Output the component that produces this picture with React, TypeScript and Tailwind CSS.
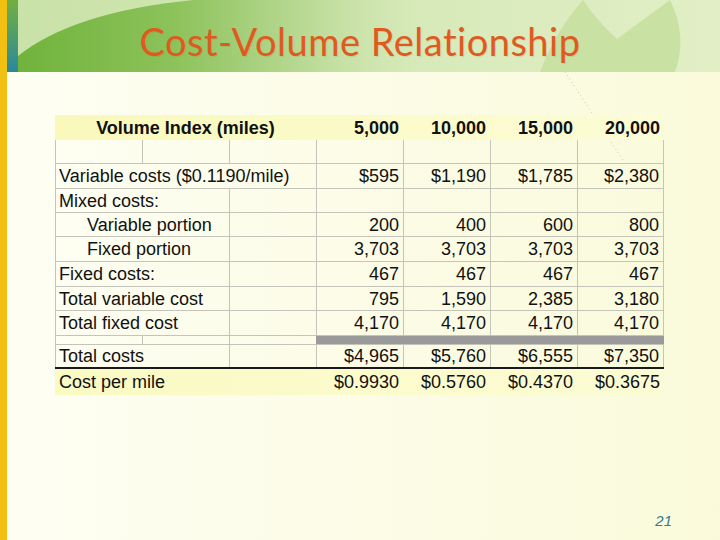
import React from "react";

type Row = {
  label: string;
  indent?: boolean;
  full?: boolean;
  h: string;
  values: string[];
};

const volumes = ["5,000", "10,000", "15,000", "20,000"];

const rows: Row[] = [
  { label: "Variable costs ($0.1190/mile)", full: true, h: "h-[25px]", values: ["$595", "$1,190", "$1,785", "$2,380"] },
  { label: "Mixed costs:", h: "h-[24px]", values: ["", "", "", ""] },
  { label: "Variable portion", indent: true, h: "h-[24px]", values: ["200", "400", "600", "800"] },
  { label: "Fixed portion", indent: true, h: "h-[25px]", values: ["3,703", "3,703", "3,703", "3,703"] },
  { label: "Fixed costs:", h: "h-[25px]", values: ["467", "467", "467", "467"] },
  { label: "Total variable cost", h: "h-[24px]", values: ["795", "1,590", "2,385", "3,180"] },
  { label: "Total fixed cost", h: "h-[25px]", values: ["4,170", "4,170", "4,170", "4,170"] },
];

const totals = ["$4,965", "$5,760", "$6,555", "$7,350"];
const perMile = ["$0.9930", "$0.5760", "$0.4370", "$0.3675"];

const line = "border-[#c4c4bb]";

function NumCell({ value, last }: { value: string; last?: boolean }) {
  return (
    <div
      className={`w-[87px] flex items-center justify-end pr-[4px] border-l ${line} ${last ? "border-r" : ""}`}
    >
      {value}
    </div>
  );
}

function HeaderArt() {
  return (
    <svg className="absolute inset-0" width="702" height="72" viewBox="0 0 702 72">
      <defs>
        <linearGradient id="arc" x1="0" y1="0" x2="1" y2="0">
          <stop offset="0" stopColor="#70b33c" />
          <stop offset="0.22" stopColor="#8cc25a" />
          <stop offset="0.42" stopColor="#bcdb98" />
          <stop offset="0.62" stopColor="#dcecc0" stopOpacity="0" />
        </linearGradient>
      </defs>
      <path d="M0 72 L0 56 Q55 12 175 0 L702 0 L702 72 Z" fill="url(#arc)" />
      <path d="M522 72 Q538 30 565 0 Q580 22 599 39 L652 0 Q670 36 657 72 Z" fill="#c9e2a3" />
    </svg>
  );
}

export default function App() {
  return (
    <div className="w-[720px] h-[540px] flex overflow-hidden font-['Liberation_Sans',Arial,sans-serif] text-[18px] text-[#111]">
      <div className="w-[7px] shrink-0 bg-[#f2c013]" />
      <div className="flex-1 flex flex-col bg-gradient-to-r from-[#fefef3] to-[#fafadb]">
        <header className="h-[72px] flex shrink-0">
          <div className="w-[11px] bg-gradient-to-b from-[#6fb03f] via-[#4f9d6a] to-[#2a879c]" />
          <div className="flex-1 relative overflow-hidden bg-gradient-to-r from-[#c9e2a8] to-[#e2efc6]">
            <HeaderArt />
            <h1 className="relative pr-[18px] pt-[22px] text-center leading-none text-[38px] font-normal tracking-[0.5px] text-[#e05a1f] font-['Lato','Noto_Sans',sans-serif] [text-shadow:1px_1px_0_rgba(120,90,40,0.15)]">
              Cost-Volume Relationship
            </h1>
          </div>
        </header>

        <main className="flex-1 flex flex-col relative pl-[48px] pt-[43px]">
          <svg className="absolute left-0 top-0" width="713" height="200" viewBox="0 0 713 200">
            <line x1="558" y1="0" x2="616" y2="88" stroke="#c9c9b8" strokeWidth="1" strokeDasharray="1 3" />
          </svg>

          <div className="relative w-[609px] leading-none">
            <div className="h-[25px] flex font-bold bg-gradient-to-r from-[#f9f9bc] to-[#fcfcd6]">
              <div className="w-[261px] flex items-center justify-center">Volume Index (miles)</div>
              {volumes.map((v) => (
                <div key={v} className="w-[87px] flex items-center justify-end pr-[4px]">
                  {v}
                </div>
              ))}
            </div>

            <div className={`h-[24px] flex border-b ${line}`}>
              {[0, 1, 2, 3, 4, 5, 6].map((i) => (
                <div key={i} className={`w-[87px] border-l ${line} ${i === 6 ? "border-r" : ""}`} />
              ))}
            </div>

            {rows.map((r) => (
              <div key={r.label} className={`${r.h} flex border-b ${line}`}>
                <div
                  className={`${r.full ? "w-[261px]" : "w-[174px]"} flex items-center whitespace-nowrap border-l ${line} ${r.indent ? "pl-[31px]" : "pl-[3px]"}`}
                >
                  {r.label}
                </div>
                {!r.full && <div className={`w-[87px] border-l ${line}`} />}
                {r.values.map((v, i) => (
                  <NumCell key={i} value={v} last={i === 3} />
                ))}
              </div>
            ))}

            <div className={`h-[9px] flex border-b ${line}`}>
              {[0, 1, 2].map((i) => (
                <div key={i} className={`w-[87px] border-l ${line}`} />
              ))}
              <div className="w-[348px] bg-[#9a9a9a]" />
            </div>

            <div className="h-[24px] flex border-b-2 border-[#1a1a1a]">
              <div className={`w-[174px] flex items-center pl-[3px] border-l ${line}`}>Total costs</div>
              <div className={`w-[87px] border-l ${line}`} />
              {totals.map((v, i) => (
                <NumCell key={i} value={v} last={i === 3} />
              ))}
            </div>

            <div className="h-[26px] flex bg-gradient-to-r from-[#fafac3] to-[#fcfcd4]">
              <div className="w-[261px] flex items-center pl-[4px]">Cost per mile</div>
              {perMile.map((v) => (
                <div key={v} className="w-[87px] flex items-center justify-end pr-[4px]">
                  {v}
                </div>
              ))}
            </div>
          </div>

          <div className="flex-1" />
          <div className="flex justify-end pr-[48px] pb-[12px]">
            <span className="italic text-[15px] leading-none text-[#2e7d8a]">21</span>
          </div>
        </main>
      </div>
    </div>
  );
}
